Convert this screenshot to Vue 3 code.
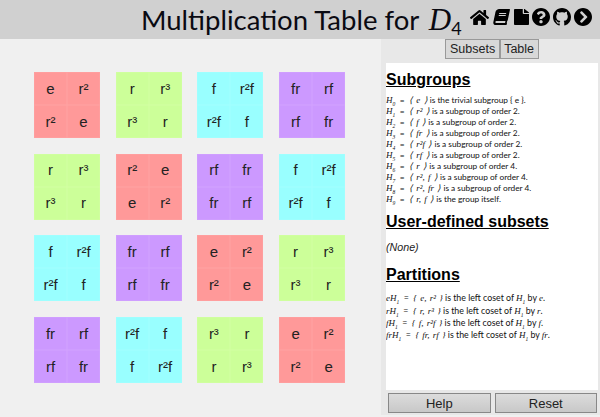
<script setup>
const t = [
  [['e','r²','r²','e'],['r','r³','r³','r'],['f','r²f','r²f','f'],['fr','rf','rf','fr']],
  [['r','r³','r³','r'],['r²','e','e','r²'],['rf','fr','fr','rf'],['f','r²f','r²f','f']],
  [['f','r²f','r²f','f'],['fr','rf','rf','fr'],['e','r²','r²','e'],['r','r³','r³','r']],
  [['fr','rf','rf','fr'],['r²f','f','f','r²f'],['r³','r','r','r³'],['e','r²','r²','e']],
]
const colors = { e: 'red', 'r²': 'red', r: 'green', 'r³': 'green', f: 'cyan', 'r²f': 'cyan', fr: 'purple', rf: 'purple' }
const blocks = t.flat()
const subgroups = [
  ['0', '⟨ e ⟩', 'is the trivial subgroup { e }.'],
  ['1', '⟨ r² ⟩', 'is a subgroup of order 2.'],
  ['2', '⟨ f ⟩', 'is a subgroup of order 2.'],
  ['3', '⟨ fr ⟩', 'is a subgroup of order 2.'],
  ['4', '⟨ r²f ⟩', 'is a subgroup of order 2.'],
  ['5', '⟨ rf ⟩', 'is a subgroup of order 2.'],
  ['6', '⟨ r ⟩', 'is a subgroup of order 4.'],
  ['7', '⟨ r², f ⟩', 'is a subgroup of order 4.'],
  ['8', '⟨ r², fr ⟩', 'is a subgroup of order 4.'],
  ['9', '⟨ r, f ⟩', 'is the group itself.'],
]
const cosets = [
  ['e', '{ e, r² }', 'e'],
  ['r', '{ r, r³ }', 'r'],
  ['f', '{ f, r²f }', 'f'],
  ['fr', '{ fr, rf }', 'fr'],
]
</script>

<template>
  <div class="page">
    <header class="top">
      <h1 class="title">Multiplication Table for <i class="d">D<sub>4</sub></i></h1>
      <nav class="icons">
        <svg width="19" height="17" viewBox="0 0 576 512"><path d="M280.37 148.26L96 300.11V464a16 16 0 0 0 16 16l112.06-.29a16 16 0 0 0 15.92-16V368a16 16 0 0 1 16-16h64a16 16 0 0 1 16 16v95.64a16 16 0 0 0 16 16.05L464 480a16 16 0 0 0 16-16V300L295.67 148.26a12.19 12.19 0 0 0-15.3 0zM571.6 251.47L488 182.56V44.05a12 12 0 0 0-12-12h-56a12 12 0 0 0-12 12v72.61L318.47 43a48 48 0 0 0-61 0L4.34 251.47a12 12 0 0 0-1.6 16.9l25.5 31A12 12 0 0 0 45.15 301l235.22-193.74a12.19 12.19 0 0 1 15.3 0L530.9 301a12 12 0 0 0 16.9-1.6l25.5-31a12 12 0 0 0-1.7-16.93z"/></svg>
        <svg width="19" height="16" viewBox="0 0 560 512"><path transform="translate(108 0) skewX(-12)" d="M448 360V24c0-13.3-10.7-24-24-24H96C43 0 0 43 0 96v320c0 53 43 96 96 96h328c13.3 0 24-10.7 24-24v-16c0-7.5-3.5-14.3-8.9-18.7-4.2-15.4-4.2-59.3 0-74.7 5.4-4.3 8.9-11.1 8.9-18.6zM128 134c0-3.3 2.7-6 6-6h212c3.3 0 6 2.7 6 6v20c0 3.3-2.7 6-6 6H134c-3.3 0-6-2.7-6-6v-20zm0 64c0-3.3 2.7-6 6-6h212c3.3 0 6 2.7 6 6v20c0 3.3-2.7 6-6 6H134c-3.3 0-6-2.7-6-6v-20zm253.4 250H96c-17.7 0-32-14.3-32-32 0-17.6 14.4-32 32-32h285.4c-1.9 17.1-1.9 46.9 0 64z"/></svg>
        <svg width="15" height="16" viewBox="0 0 384 512" preserveAspectRatio="none"><path d="M224 136V0H24C10.7 0 0 10.7 0 24v464c0 13.3 10.7 24 24 24h336c13.3 0 24-10.7 24-24V160H248c-13.2 0-24-10.8-24-24zm160-14.1v6.1H256V0h6.1c6.4 0 12.5 2.5 17 7l97.9 98c4.5 4.5 7 10.6 7 16.9z"/></svg>
        <svg width="18" height="18" viewBox="8 8 496 496"><path d="M504 256c0 136.997-111.043 248-248 248S8 392.997 8 256C8 119.083 119.043 8 256 8s248 111.083 248 248zM262.655 90c-54.497 0-89.255 22.957-116.549 63.758-3.536 5.286-2.353 12.415 2.715 16.258l34.699 26.31c5.205 3.947 12.621 3.008 16.665-2.122 17.864-22.658 30.113-35.797 57.303-35.797 20.429 0 45.698 13.148 45.698 32.958 0 14.976-12.363 22.667-32.534 33.976C247.128 238.528 216 254.941 216 296v4c0 6.627 5.373 12 12 12h56c6.627 0 12-5.373 12-12v-1.333c0-28.462 83.186-29.647 83.186-106.667 0-58.002-60.165-102-116.531-102zM256 338c-25.365 0-46 20.635-46 46 0 25.364 20.635 46 46 46s46-20.636 46-46c0-25.365-20.635-46-46-46z"/></svg>
        <svg width="18" height="18" viewBox="0 0 16 16"><path d="M8 0C3.58 0 0 3.58 0 8c0 3.54 2.29 6.53 5.47 7.59.4.07.55-.17.55-.38 0-.19-.01-.82-.01-1.49-2.01.37-2.53-.49-2.69-.94-.09-.23-.48-.94-.82-1.13-.28-.15-.68-.52-.01-.53.63-.01 1.08.58 1.23.82.72 1.21 1.87.87 2.33.66.07-.52.28-.87.51-1.07-1.78-.2-3.64-.89-3.64-3.95 0-.87.31-1.59.82-2.15-.08-.2-.36-1.02.08-2.12 0 0 .67-.21 2.2.82.64-.18 1.32-.27 2-.27.68 0 1.36.09 2 .27 1.53-1.04 2.2-.82 2.2-.82.44 1.1.16 1.92.08 2.12.51.56.82 1.27.82 2.15 0 3.07-1.87 3.75-3.65 3.95.29.25.54.73.54 1.48 0 1.07-.01 1.93-.01 2.2 0 .21.15.46.55.38A8.013 8.013 0 0 0 16 8c0-4.42-3.58-8-8-8z"/></svg>
        <svg width="18" height="18" viewBox="8 8 496 496"><path d="M256 8c137 0 248 111 248 248S393 504 256 504 8 393 8 256 119 8 256 8zm113.9 231L234.4 103.5c-9.4-9.4-24.6-9.4-33.9 0l-17 17c-9.4 9.4-9.4 24.6 0 33.9L285.1 256 183.5 357.6c-9.4 9.4-9.4 24.6 0 33.9l17 17c9.4 9.4 24.6 9.4 33.9 0L369.9 273c9.4-9.4 9.4-24.6 0-34z"/></svg>
      </nav>
    </header>
    <div class="body">
      <main class="table">
        <div v-for="(b, i) in blocks" :key="i" class="block">
          <div v-for="(c, j) in b" :key="j" class="cell" :class="colors[c]">{{ c }}</div>
        </div>
      </main>
      <aside class="side">
        <div class="tabs">
          <button class="tab">Subsets</button>
          <button class="tab">Table</button>
        </div>
        <div class="content">
          <h2>Subgroups</h2>
          <p v-for="s in subgroups" :key="s[0]" class="m"><i class="mi">H<sub>{{ s[0] }}</sub></i><span class="eq">=</span><i class="mi sp">{{ s[1] }}</i> {{ s[2] }}</p>
          <h2 class="next">User-defined subsets</h2>
          <p class="none">(None)</p>
          <h2 class="last">Partitions</h2>
          <p v-for="c in cosets" :key="c[0]" class="m co"><i class="mi">{{ c[0] }}H<sub>1</sub></i><span class="eq">=</span><i class="mi sp">{{ c[1] }}</i> is the left coset of <i class="mi">H<sub>1</sub></i> by <i class="mi">{{ c[2] }}</i>.</p>
        </div>
        <div class="actions">
          <button class="act">Help</button>
          <button class="act">Reset</button>
        </div>
      </aside>
    </div>
  </div>
</template>

<style>
body { margin: 0; }
</style>

<style scoped>
.page { width: 600px; height: 417px; display: flex; flex-direction: column; background: #f0f0f0; overflow: hidden; font-family: "Liberation Sans", Arial, sans-serif; color: #000; }
.top { height: 39px; flex: none; background: #d0d0d0; display: flex; align-items: center; padding-left: 141px; box-sizing: border-box; }
.title { margin: 0; font: 400 27.5px/39px Lato, sans-serif; white-space: nowrap; width: 329px; flex: none; color: #0a0a12; }
.d { font-family: "Liberation Serif", serif; font-size: 31px; margin-left: 3px; }
.d sub { font-style: normal; font-family: Lato, sans-serif; font-size: 18px; line-height: 0; vertical-align: -5px; }
.icons { display: flex; gap: 3px; align-items: center; margin-top: -5px; }
.icons svg { display: block; flex: none; }
.body { flex: 1; display: flex; min-height: 0; }
.table { flex: none; width: 381px; box-sizing: border-box; padding: 33px 0 0 34px; display: grid; grid-template-columns: repeat(4, 66px); grid-auto-rows: 66px; column-gap: 15.7px; row-gap: 15.7px; align-content: start; }
.block { display: grid; grid-template-columns: 1fr 1fr; grid-template-rows: 1fr 1fr; }
.cell { display: flex; align-items: center; justify-content: center; font-size: 15px; color: #222; padding-bottom: 1px; box-sizing: border-box; }
.red { background: #ff9999; box-shadow: inset 0 0 0 .5px #ffa3a3; }
.green { background: #ccff99; box-shadow: inset 0 0 0 .5px #d2ffa3; }
.cyan { background: #99ffff; box-shadow: inset 0 0 0 .5px #a3ffff; }
.purple { background: #cc99ff; box-shadow: inset 0 0 0 .5px #d2a3ff; }
.side { flex: none; width: 219px; height: 376px; background: #e8e8e8; display: flex; flex-direction: column; }
.tabs { height: 24px; flex: none; display: flex; justify-content: center; align-items: flex-start; padding-left: 3px; }
.tab { height: 20px; padding: 0 3.5px; font: 12.5px "Liberation Sans", sans-serif; background: #d8d8d8; border: 1px solid #999; color: #222; }
.content { flex: 1; background: #fff; margin: 0 2px 0 5px; padding: 0; min-height: 0; overflow: hidden; }
h2 { font: 700 16px/20px "Liberation Sans", sans-serif; text-decoration: underline; margin: 0; padding: 7px 0 0; }
h2.next { margin-top: 2px; padding-top: 5px; }
h2.last { margin-top: 6px; padding-top: 5px; }
.m { margin: 0; font: 8.3px/11.05px Lato, sans-serif; white-space: nowrap; color: #111; }
.co { font-size: 8.8px; }
h2 + .m { margin-top: 5px; }
h2.last + .m { margin-top: 7px; }
.mi { font-family: "Liberation Serif", serif; font-size: 9px; }
.sp { word-spacing: 1px; }
.eq { margin: 0 4.5px; }
.m sub { font-size: 5.5px; line-height: 0; }
.none { margin: 9px 0 0; font: italic 10.7px/13px "Liberation Sans", sans-serif; color: #222; }
.actions { height: 25px; flex: none; display: flex; gap: 4px; padding: 3px 3px 2px 7px; box-sizing: border-box; }
.act { flex: 1; font: 13px "Liberation Sans", sans-serif; color: #222; background: linear-gradient(#dcdcdc, #c8c8c8); border: 1px solid #888; padding: 0; }
</style>
